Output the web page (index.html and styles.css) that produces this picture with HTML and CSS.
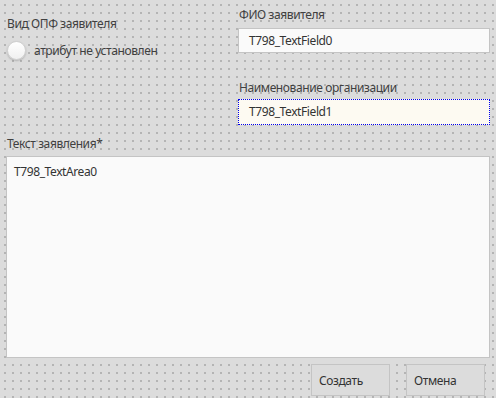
FILE: index.html
```html
<!DOCTYPE html>
<html lang="ru">
<head>
    <meta charset="UTF-8">
    <title>Заявление</title>
    <link rel="stylesheet" href="styles.css">
</head>
<body>
    <div class="form">
        <div class="top">
            <div class="col-left">
                <div class="label">Вид ОПФ заявителя</div>
                <div class="radio-row">
                    <span class="radio"></span>
                    <span class="radio-text">атрибут не установлен</span>
                </div>
            </div>
            <div class="col-right">
                <div class="label">ФИО заявителя</div>
                <div class="field">T798_TextField0</div>
                <div class="label label-org">Наименование организации</div>
                <div class="field field-focus">T798_TextField1</div>
            </div>
        </div>
        <div class="label label-text">Текст заявления*</div>
        <div class="textarea">T798_TextArea0</div>
        <div class="buttons">
            <div class="btn">Создать</div>
            <div class="btn">Отмена</div>
        </div>
    </div>
</body>
</html>
```

FILE: styles.css
```css
html, body {
    margin: 0;
    height: 100%;
    overflow: hidden;
}
body {
    font-family: "Noto Sans", "Open Sans", sans-serif;
    font-size: 12px;
    letter-spacing: -0.4px;
    color: #404040;
    background-color: #dcdcdc;
    background-image: radial-gradient(circle at 1px 1px, #b4b4b4 0.9px, transparent 1.3px);
    background-size: 8px 8px;
    background-position: 4px 4px;
}
.form {
    padding: 8px 6px 0 6px;
}
.top {
    display: grid;
    grid-template-columns: 232px 252px;
}
.label {
    height: 14px;
    line-height: 14px;
    padding-left: 1px;
    white-space: nowrap;
}
.col-left .label {
    margin-top: 9px;
}
.radio-row {
    display: flex;
    align-items: center;
    gap: 8px;
    margin-top: 10px;
    padding-left: 1px;
}
.radio {
    width: 17px;
    height: 17px;
    border-radius: 50%;
    background: linear-gradient(#ffffff, #f0f0f0);
    border: 1px solid #cfcfcf;
    box-shadow: 0 1px 2px rgba(0, 0, 0, 0.2);
}
.field {
    margin-top: 6px;
    height: 23px;
    line-height: 23px;
    padding-left: 10px;
    background: #fafafa;
    border: 1px solid #c4c4c4;
    color: #333;
}
.label-org {
    margin-top: 28px;
}
.field-focus {
    margin-top: 4px;
    height: 24px;
    line-height: 24px;
    background: #fdfaf2;
    border: 1px dotted #0000ee;
}
.label-text {
    margin-top: 12px;
}
.textarea {
    margin-top: 5px;
    height: 194px;
    padding: 6px 7px 0;
    background: #fafafa;
    border: 1px solid #c4c4c4;
    color: #333;
    width: 468px;
}
.buttons {
    display: flex;
    justify-content: flex-end;
    gap: 16px;
    margin-top: 6px;
    padding-right: 5px;
}
.btn {
    width: 79px;
    height: 32px;
    line-height: 32px;
    padding-left: 7px;
    box-sizing: border-box;
    border: 1px solid #c4c4c4;
    background: #dcdcdc;
    color: #333;
}
```
